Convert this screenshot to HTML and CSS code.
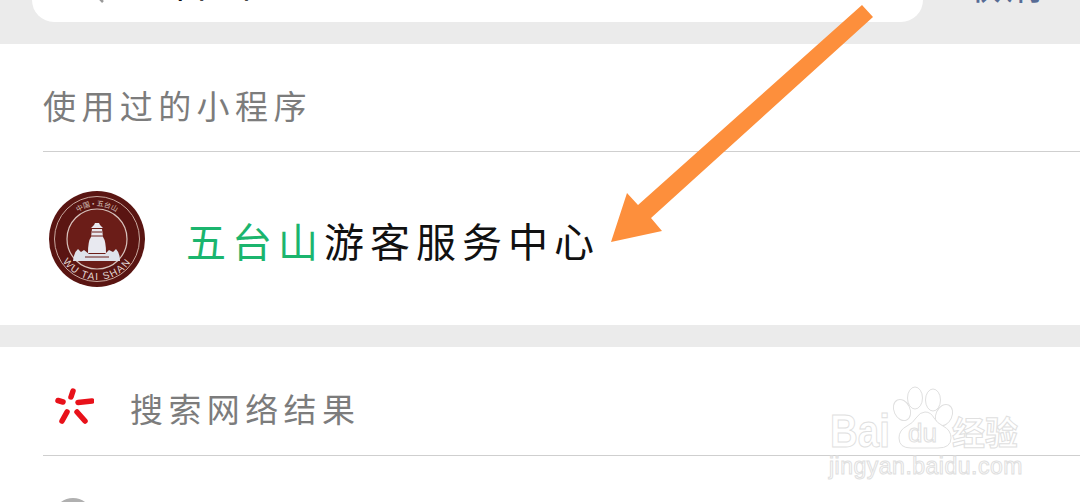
FILE: index.html
```html
<!DOCTYPE html>
<html lang="zh-CN">
<head>
    <meta charset="UTF-8">
    <title>搜索</title>
    <link rel="stylesheet" href="styles.css">
</head>
<body>

<div class="search-band">
    <div class="search-box">
        <svg class="search-icon" width="28" height="28" viewBox="0 0 28 28">
            <circle cx="12" cy="12" r="9" fill="none" stroke="#999" stroke-width="2.5"/>
            <line x1="18" y1="19" x2="25" y2="26" stroke="#999" stroke-width="2.5"/>
        </svg>
        <span class="search-text">五台山</span>
    </div>
    <span class="cancel">取消</span>
</div>

<section class="panel">
    <div class="panel-title">使用过的小程序</div>
    <div class="app-row">
        <svg class="app-logo" width="96" height="96" viewBox="0 0 96 96">
            <defs>
                <path id="arcTop" d="M15 48a33 33 0 0 1 66 0"/>
                <path id="arcBottom" d="M7 48a41 41 0 0 0 82 0"/>
            </defs>
            <circle cx="48" cy="48" r="48" fill="#5a1512"/>
            <circle cx="48" cy="48" r="42.5" fill="none" stroke="#c9a9a0" stroke-width="1"/>
            <circle cx="48" cy="48" r="30" fill="#6b1d18" stroke="#d8c3bd" stroke-width="1.2"/>
            <text class="logo-cn"><textPath href="#arcTop" startOffset="50%" text-anchor="middle">中国 • 五台山</textPath></text>
            <text class="logo-en"><textPath href="#arcBottom" startOffset="50%" text-anchor="middle">WU TAI SHAN</textPath></text>
            <path d="M24 70q1-9 5-12l3 3 3-2 5 4h16l4-4 4 2 3-3q4 4 4 12z" fill="#dfe2ea"/>
            <path d="M46 32h4l1 2 3 3h-12l3-3z" fill="#e8e9f0"/>
            <path d="M43 38h10l1 8q3 4 3 16h-18q0-12 3-16z" fill="#e8e9f0"/>
            <path d="M43 41h10M42 45h12M36 66h24" stroke="#6b1d18" stroke-width="1"/>
        </svg>
        <div class="app-name"><em>五台山</em>游客服务中心</div>
    </div>
</section>

<section class="panel">
    <div class="web-row">
        <svg class="web-icon" width="42" height="42" viewBox="0 0 42 42">
            <g fill="none" stroke="#e8111a" stroke-width="5.5" stroke-linecap="round">
                <line x1="21" y1="6" x2="19" y2="12"/>
                <line x1="6" y1="15.5" x2="11" y2="17"/>
                <line x1="26" y1="17.5" x2="40" y2="16"/>
                <line x1="15" y1="27" x2="10" y2="36"/>
                <line x1="25" y1="27" x2="33" y2="36"/>
            </g>
        </svg>
        <span class="web-label">搜索网络结果</span>
    </div>
    <div class="next-row"><span class="next-icon"></span></div>
</section>

<svg class="arrow" width="1080" height="502" viewBox="0 0 1080 502">
    <path d="M862 5L873 17L651 218L662 231L611 242L627 193L638 205Z" fill="#fd8f3c"/>
</svg>

<svg class="watermark" width="200" height="120" viewBox="0 0 200 120">
    <g fill="#fff" stroke="#e0e0e0" stroke-width="1">
        <ellipse cx="73" cy="28" rx="8" ry="11" transform="rotate(-25 73 28)"/>
        <ellipse cx="86" cy="16" rx="7.5" ry="11"/>
        <ellipse cx="104" cy="18" rx="7.5" ry="11"/>
        <ellipse cx="115" cy="33" rx="8" ry="11" transform="rotate(25 115 33)"/>
        <path d="M70 56q0-8 8-12q6-3 9-8q4-6 9-6q6 0 9 6q3 5 9 8q8 4 8 12q0 10-13 10h-27q-12 0-12-10z"/>
    </g>
    <text class="wm-big" x="1" y="65" textLength="60" lengthAdjust="spacingAndGlyphs">Bai</text>
    <text class="wm-du" x="79" y="60" textLength="29" lengthAdjust="spacingAndGlyphs">du</text>
    <text class="wm-cn" x="123" y="63">经验</text>
    <text class="wm-url" x="0" y="92">jingyan.baidu.com</text>
</svg>

</body>
</html>
```

FILE: styles.css
```css
html, body {
    margin: 0;
    padding: 0;
    height: 502px;
    overflow: hidden;
}

body {
    position: relative;
    background-color: #ebebeb;
    font-family: "Liberation Serif", "Noto Sans CJK SC", sans-serif;
}

.search-band {
    height: 44px;
    display: flex;
    align-items: flex-start;
    overflow: hidden;
    padding-left: 32px;
    box-sizing: border-box;
}

.search-box {
    width: 891px;
    height: 22px;
    background-color: #fff;
    border-radius: 0 0 22px 22px;
    display: flex;
    align-items: flex-end;
    overflow: hidden;
    flex-shrink: 0;
    padding-left: 46px;
    box-sizing: border-box;
}

.search-icon {
    margin-bottom: 18px;
    flex-shrink: 0;
}

.search-text {
    font-size: 38px;
    line-height: 38px;
    margin-left: 24px;
    margin-bottom: 19px;
    letter-spacing: 4px;
    color: #111;
}

.cancel {
    font-size: 38px;
    line-height: 38px;
    margin-top: -33px;
    margin-left: 40px;
    letter-spacing: 4px;
    color: #576b95;
}

.panel {
    background-color: #fff;
    margin-bottom: 22px;
}

.panel:last-of-type {
    margin-bottom: 0;
    height: 155px;
    overflow: hidden;
}

.panel-title {
    height: 108px;
    margin-left: 43px;
    border-bottom: 1px solid #cfcfcf;
    display: flex;
    align-items: center;
    padding-top: 14px;
    box-sizing: border-box;
    font-size: 33px;
    letter-spacing: 5.4px;
    color: #7c7c7c;
}

.app-row {
    height: 173px;
    display: flex;
    align-items: center;
    padding: 0 0 0 49px;
}

.app-logo {
    margin-right: 41px;
    flex-shrink: 0;
}

.logo-cn {
    font-size: 7px;
    fill: #d8c3bd;
}

.logo-en {
    font-family: "Liberation Sans", sans-serif;
    font-size: 10px;
    letter-spacing: 1.5px;
    fill: #e2d8d4;
}

.app-name {
    font-size: 40px;
    letter-spacing: 6px;
    margin-top: 2px;
    color: #111;
}

.app-name em {
    font-style: normal;
    color: #1bb56e;
}

.web-row {
    height: 109px;
    margin-left: 43px;
    border-bottom: 1px solid #cfcfcf;
    display: flex;
    align-items: center;
    padding: 10px 0 0 9px;
    box-sizing: border-box;
}

.web-icon {
    margin-right: 36px;
    flex-shrink: 0;
}

.web-label {
    font-size: 33px;
    letter-spacing: 5.4px;
    margin-top: 4px;
    color: #7c7c7c;
}

.next-row {
    padding: 42px 0 0 53px;
}

.next-icon {
    display: block;
    width: 40px;
    height: 40px;
    border: 4px solid #b0b0b0;
    border-radius: 50%;
    box-sizing: border-box;
}

.arrow {
    position: absolute;
    left: 0;
    top: 0;
}

.watermark {
    position: absolute;
    left: 829px;
    top: 382px;
    overflow: visible;
}

.watermark text {
    fill: #fff;
    stroke: #e0e0e0;
    stroke-width: 1;
    font-family: "Liberation Sans", "Noto Sans CJK SC", sans-serif;
}

.wm-big {
    font-size: 46px;
    font-weight: bold;
}

.wm-du {
    font-size: 25px;
}

.wm-cn {
    font-size: 33px;
    font-weight: bold;
}

.wm-url {
    font-size: 23px;
    letter-spacing: 0.5px;
}
```
